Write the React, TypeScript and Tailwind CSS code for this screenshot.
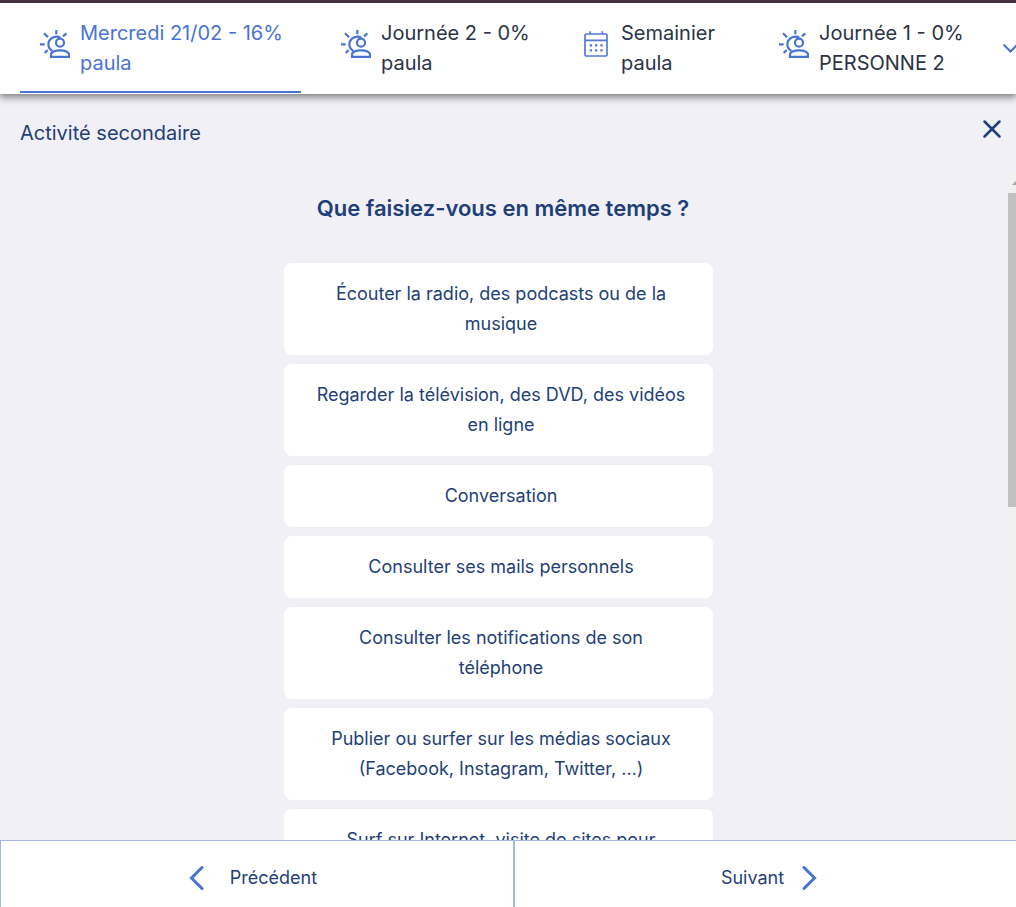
import React from "react";

function DayIcon() {
  return (
    <svg viewBox="120 90 90 84" className="h-7 w-[30px] shrink-0" fill="none" stroke="#4973d2" strokeWidth="6.5" aria-hidden="true">
      <path d="M120 133h14M169 90v13M132 100l12 12M199 100l-10 9M134 159l9-9" />
      <path d="M157 153c-8-5-12-12-12-20 0-13 11-23 24-23 5 0 9 1 12 3" />
      <circle cx="180" cy="128" r="12" />
      <path d="M153 170.500v-7.500c0-7 12-12 27-12s27 5 27 12v7.500z" />
    </svg>
  );
}

function CalendarIcon() {
  return (
    <svg viewBox="0 0 90 84" className="h-7 w-[30px] shrink-0" fill="none" stroke="#5379d5" strokeWidth="5" aria-hidden="true">
      <rect x="12" y="12" width="66" height="66" rx="3" />
      <path d="M12 31h66M27 4v8M64 4v8" />
      <path d="M26 46h7m9 0h7m9 0h7M26 61h7m9 0h7m9 0h7" strokeWidth="7" />
    </svg>
  );
}

const tabs = [
  { title: "Mercredi 21/02 - 16%", person: "paula", kind: "day", width: "w-[281px]" },
  { title: "Journée 2 - 0%", person: "paula", kind: "day", width: "w-[220px]" },
  { title: "Semainier", person: "paula", kind: "week", width: "w-[178px]" },
  { title: "Journée 1 - 0%", person: "PERSONNE 2", kind: "day", width: "w-[218px]" },
];

const activities = [
  "Écouter la radio, des podcasts ou de la musique",
  "Regarder la télévision, des DVD, des vidéos en ligne",
  "Conversation",
  "Consulter ses mails personnels",
  "Consulter les notifications de son téléphone",
  "Publier ou surfer sur les médias sociaux (Facebook, Instagram, Twitter, …)",
  "Surf sur Internet, visite de sites pour",
];

export default function App() {
  return (
    <div className="flex h-screen flex-col overflow-hidden bg-[#f1f0f7] font-['Inter','Noto_Sans',sans-serif] text-[#1f3f78]">
      <header className="relative z-10 shrink-0 border-t-[3px] border-[#46323f] bg-white shadow-[0_2px_8px_1px_rgba(0,0,0,0.5)]">
        <nav className="flex h-[91px] gap-5 overflow-hidden pl-5" aria-label="Carnets">
          {tabs.map((tab, i) => (
            <button
              key={tab.title}
              type="button"
              className={`flex shrink-0 items-start border-b-2 px-5 pt-[15px] text-left text-xl leading-[30px] whitespace-nowrap ${tab.width} ${
                i === 0 ? "mb-px border-[#4973d2] text-[#4973d2]" : "border-transparent text-[#2b3346]"
              }`}
            >
              <span className="mt-3 mr-[10px]">{tab.kind === "day" ? <DayIcon /> : <CalendarIcon />}</span>
              <span>
                {tab.title}
                <br />
                {tab.person}
              </span>
            </button>
          ))}
          <button type="button" aria-label="Autres carnets" className="shrink-0 self-center">
            <svg viewBox="0 0 24 24" className="size-6" fill="none" stroke="#4973d2" strokeWidth="2" aria-hidden="true">
              <path d="M6.500 7.500l7 7 7-7" />
            </svg>
          </button>
        </nav>
      </header>

      <main className="flex min-h-0 flex-1 flex-col">
        <div className="flex h-[78px] shrink-0 items-start justify-between pt-[23px] pr-3 pl-5">
          <h1 className="text-xl leading-8">Activité secondaire</h1>
          <button type="button" aria-label="Fermer">
            <svg viewBox="0 0 24 24" className="size-6" fill="none" stroke="#1f3f78" strokeWidth="2.500" strokeLinecap="round" aria-hidden="true">
              <path d="M4.500 4.500l15 15M19.500 4.500l-15 15" />
            </svg>
          </button>
        </div>
        <div className="flex min-h-0 flex-1">
          <section className="flex min-w-0 flex-1 flex-col items-center overflow-hidden pt-5">
            <h2 className="mb-[39px] text-[22px] leading-8 font-semibold">Que faisiez-vous en même temps ?</h2>
            <div className="mr-[10px] flex w-[429px] flex-col gap-[9px]">
              {activities.map((label) => (
                <button key={label} type="button" className="rounded-lg bg-white py-4 pr-[26px] pl-8 text-center text-lg leading-[30px]">
                  {label}
                </button>
              ))}
            </div>
          </section>
          <div className="flex w-[10px] shrink-0 flex-col bg-[#f1f1f1]" aria-hidden="true">
            <div className="flex h-[21px] shrink-0 items-center justify-end">
              <svg viewBox="0 0 4 4" className="size-1" fill="#a3a3a3">
                <path d="M0 4L4 0V4z" />
              </svg>
            </div>
            <div className="ml-[2px] h-[47%] bg-[#c1c1c1]" />
          </div>
        </div>
      </main>

      <footer className="shrink-0 overflow-hidden bg-white">
        <div className="grid h-[67px] w-[calc(100%+11px)] grid-cols-2 border-t border-l border-[#a3b8e9] text-lg">
          <button type="button" className="flex items-center justify-center border-r border-[#a3b8e9] pt-2 pr-2">
            <svg viewBox="0 0 15 24" className="mr-[26px] h-6 w-[15px]" fill="none" stroke="#4973d2" strokeWidth="3" strokeLinecap="round" aria-hidden="true">
              <path d="M13 1.500L2.500 12 13 22.500" />
            </svg>
            Précédent
          </button>
          <button type="button" className="flex items-center justify-center border-l border-[#a3b8e9] pt-2 pr-1">
            Suivant
            <svg viewBox="0 0 15 24" className="ml-[18px] h-6 w-[15px]" fill="none" stroke="#4973d2" strokeWidth="3" strokeLinecap="round" aria-hidden="true">
              <path d="M2 1.500L12.500 12 2 22.500" />
            </svg>
          </button>
        </div>
      </footer>
    </div>
  );
}
